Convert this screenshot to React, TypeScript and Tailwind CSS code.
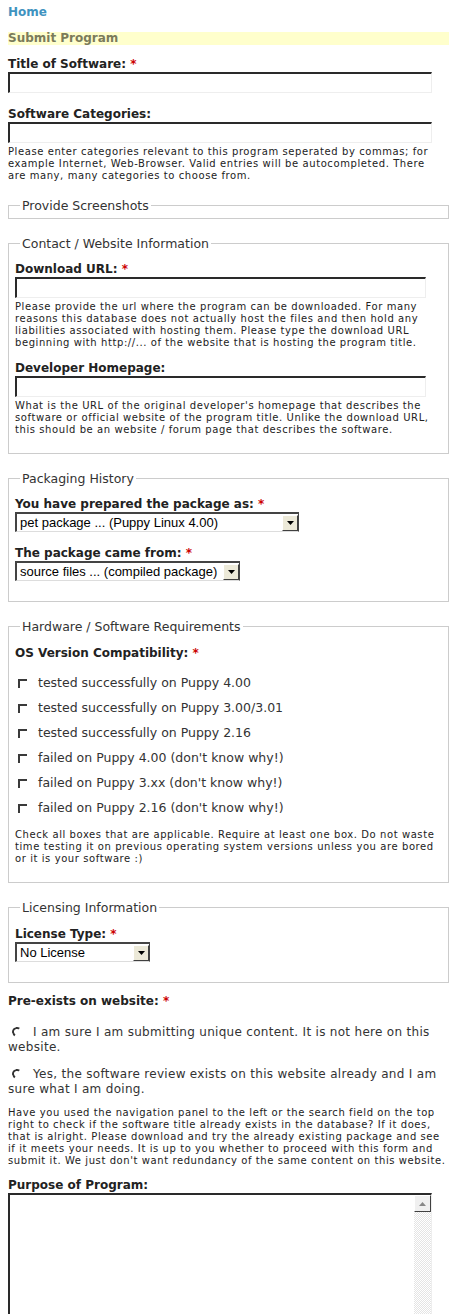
import React from "react"

const Star = () => <span className="text-[#cc0000]"> *</span>

function Label({ children, req, className = "" }: { children: React.ReactNode; req?: boolean; className?: string }) {
  return (
    <div className={"text-[12px] leading-[15px] font-bold text-[#222] " + className}>
      {children}
      {req && <Star />}
    </div>
  )
}

function TextInput({ w }: { w: string }) {
  return (
    <div
      className={
        "h-[21px] border-t-2 border-l-2 border-r border-b border-t-[#2a2a2a] border-l-[#2a2a2a] border-r-[#eeeeee] border-b-[#eeeeee] bg-white " +
        w
      }
    />
  )
}

function Help({ children, className = "" }: { children: React.ReactNode; className?: string }) {
  return <p className={"text-[10px] leading-[12px] tracking-[0.58px] text-[#222] " + className}>{children}</p>
}

function DropArrow() {
  return (
    <div className="flex h-[16px] w-[16px] shrink-0 items-center justify-center border border-t-white border-l-white border-r-[#404040] border-b-[#404040] bg-[#ece9d8]">
      <svg width="7" height="4" viewBox="0 0 7 4">
        <path d="M0 0h7L3.5 4z" fill="#000" />
      </svg>
    </div>
  )
}

function Select({ value, w }: { value: string; w: string }) {
  return (
    <div
      className={
        "flex h-[20px] items-center border-t-2 border-l-2 border-r border-b border-t-[#444] border-l-[#444] border-r-[#444] border-b-[#dddddd] bg-white " +
        w
      }
    >
      <span className="flex-1 truncate pl-[3px] font-['Liberation_Sans',Arial,sans-serif] text-[13px] leading-[16px] text-black">
        {value}
      </span>
      <DropArrow />
    </div>
  )
}

function Box({ title, children, className = "" }: { title: string; children?: React.ReactNode; className?: string }) {
  return (
    <fieldset className={"border border-[#cccccc] px-[6px] " + className}>
      <legend className="ml-[5px] px-[2px] text-[12.5px] leading-[15px] text-[#333]">{title}</legend>
      {children}
    </fieldset>
  )
}

function Check({ label }: { label: string }) {
  return (
    <div className="flex h-[25px] items-center">
      <span className="ml-[3px] inline-block h-[9px] w-[9px] border-t-2 border-l-2 border-[#3a3a3a]" />
      <span className="ml-[11px] text-[12.5px] text-[#333]">{label}</span>
    </div>
  )
}

function Radio({ children, className = "" }: { children: React.ReactNode; className?: string }) {
  return (
    <p className={"text-[12px] leading-[15px] tracking-[0.3px] text-[#333] " + className}>
      <span className="mb-[1px] ml-[4px] mr-[11px] inline-block h-[10px] w-[10px] -rotate-12 rounded-full border-2 border-t-[#333] border-l-[#333] border-r-transparent border-b-transparent align-middle" />
      {children}
    </p>
  )
}

const checks = [
  "tested successfully on Puppy 4.00",
  "tested successfully on Puppy 3.00/3.01",
  "tested successfully on Puppy 2.16",
  "failed on Puppy 4.00 (don't know why!)",
  "failed on Puppy 3.xx (don't know why!)",
  "failed on Puppy 2.16 (don't know why!)",
]

export default function App() {
  return (
    <div className="w-[455px] overflow-hidden bg-white pl-2 pr-[6px] pt-[5px] font-['DejaVu_Sans',Verdana,sans-serif] text-[#222]">
      <a href="#" className="block text-[12px] leading-[15px] font-bold text-[#3f93c0]">
        Home
      </a>
      <h2 className="mt-[12px] h-[13px] bg-[#ffffcc] text-[12px] leading-[13px] font-bold text-[#7b7b5b]">
        Submit Program
      </h2>

      <Label req className="mt-[12px]">Title of Software:</Label>
      <TextInput w="w-[424px]" />

      <Label className="mt-[14px]">Software Categories:</Label>
      <TextInput w="w-[424px]" />
      <Help className="mt-[3px]">
        Please enter categories relevant to this program seperated by commas; for
        <br />
        example Internet, Web-Browser. Valid entries will be autocompleted. There
        <br />
        are many, many categories to choose from.
      </Help>

      <Box title="Provide Screenshots" className="mt-[16px] pb-[5px]" />

      <Box title="Contact / Website Information" className="mt-[17px] pt-[11px] pb-[17px]">
        <Label req>Download URL:</Label>
        <TextInput w="w-[411px]" />
        <Help className="mt-[3px]">
          Please provide the url where the program can be downloaded. For many reasons this database does not actually
          host the files and then hold any liabilities associated with hosting them. Please type the download URL
          beginning with http://... of the website that is hosting the program title.
        </Help>
        <Label className="mt-[12px]">Developer Homepage:</Label>
        <TextInput w="w-[411px]" />
        <Help className="mt-[3px]">
          What is the URL of the original developer's homepage that describes the software or official website of the
          program title. Unlike the download URL, this should be an website / forum page that describes the software.
        </Help>
      </Box>

      <Box title="Packaging History" className="mt-[17px] pt-[11px] pb-[20px]">
        <Label req>You have prepared the package as:</Label>
        <Select value="pet package ... (Puppy Linux 4.00)" w="w-[284px]" />
        <Label req className="mt-[14px]">The package came from:</Label>
        <Select value="source files ... (compiled package)" w="w-[225px]" />
      </Box>

      <Box title="Hardware / Software Requirements" className="mt-[17px] pt-[12px] pb-[17px]">
        <Label req>OS Version Compatibility:</Label>
        <div className="mt-[10px]">
          {checks.map((c) => (
            <Check key={c} label={c} />
          ))}
        </div>
        <Help className="mt-[8px]">
          Check all boxes that are applicable. Require at least one box. Do not waste time testing it on previous
          operating system versions unless you are bored or it is your software :)
        </Help>
      </Box>

      <Box title="Licensing Information" className="mt-[17px] pt-[12px] pb-[20px]">
        <Label req>License Type:</Label>
        <Select value="No License" w="w-[135px]" />
      </Box>

      <Label req className="mt-[11px]">Pre-exists on website:</Label>
      <Radio className="mt-[16px]">I am sure I am submitting unique content. It is not here on this website.</Radio>
      <Radio className="mt-[12px]">Yes, the software review exists on this website already and I am sure what I am doing.</Radio>
      <Help className="mt-[10px]">
        Have you used the navigation panel to the left or the search field on the top
        <br />
        right to check if the software title already exists in the database? If it does,
        <br />
        that is alright. Please download and try the already existing package and see
        <br />
        if it meets your needs. It is up to you whether to proceed with this form and
        <br />
        submit it. We just don't want redundancy of the same content on this website.
      </Help>

      <Label className="mt-[11px]">Purpose of Program:</Label>
      <div className="flex h-[160px] w-[424px] border-t-2 border-l-2 border-r border-b border-t-[#2a2a2a] border-l-[#2a2a2a] border-r-[#eeeeee] border-b-[#eeeeee] bg-white">
        <div className="flex-1" />
        <div className="flex w-[17px] flex-col">
          <div className="flex h-[17px] items-center justify-center border border-t-white border-l-white border-r-[#404040] border-b-[#404040] bg-[#f0f0f0]">
            <svg width="7" height="4" viewBox="0 0 7 4">
              <path d="M3.5 0L7 4H0z" fill="#888" />
            </svg>
          </div>
          <div className="flex-1 bg-[repeating-conic-gradient(#e4e4e4_0_25%,#ffffff_0_50%)] bg-[length:2px_2px]" />
        </div>
      </div>
    </div>
  )
}
